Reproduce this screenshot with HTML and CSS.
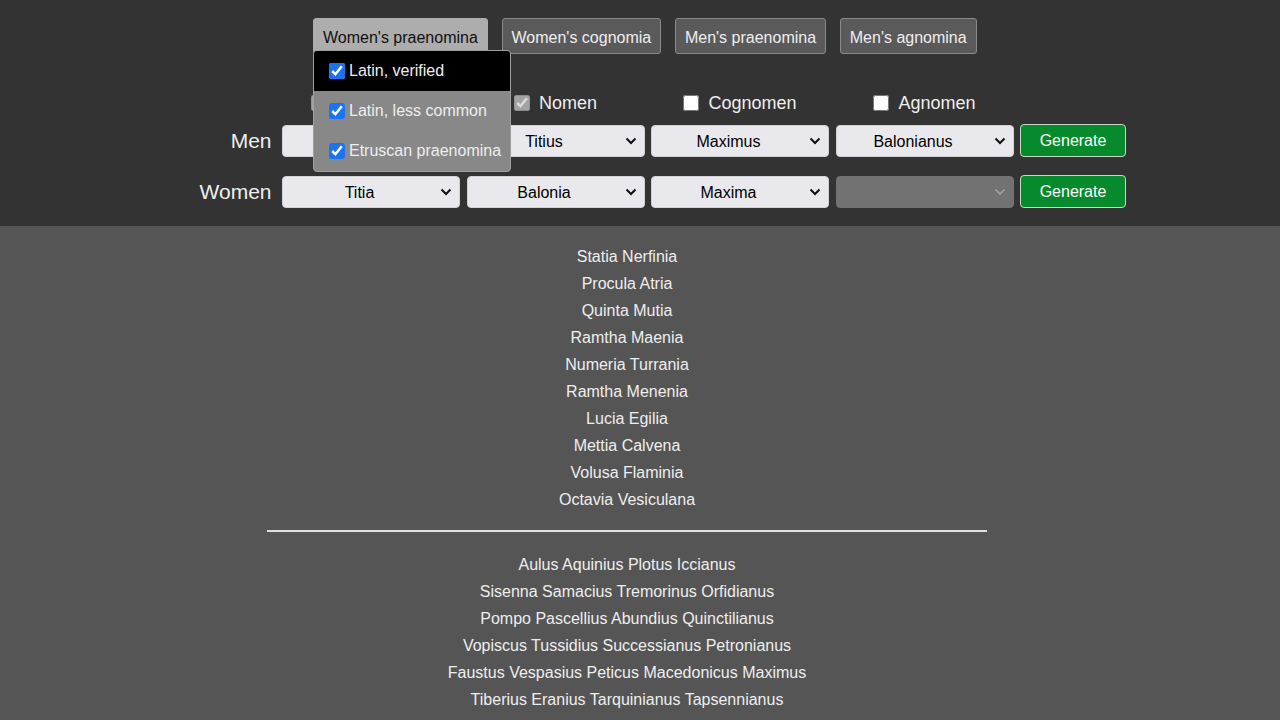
FILE: index.html
```html
<!DOCTYPE html>
<html lang="en">
<head>
<meta charset="utf-8">
<title>Roman Name Generator</title>
<link rel="stylesheet" href="styles.css">
</head>
<body>
<header class="top">
  <nav class="tabs">
    <div class="tab-wrap">
      <button class="tab tab-active">Women's praenomina</button>
      <div class="menu">
        <label class="menu-item menu-item-hover"><input type="checkbox" checked> Latin, verified</label>
        <label class="menu-item"><input type="checkbox" checked> Latin, less common</label>
        <label class="menu-item"><input type="checkbox" checked> Etruscan praenomina</label>
      </div>
    </div>
    <button class="tab">Women's cognomia</button>
    <button class="tab">Men's praenomina</button>
    <button class="tab">Men's agnomina</button>
  </nav>

  <div class="gen">
    <div class="cell"></div>
    <div class="cell check check-hidden"><input type="checkbox" checked disabled aria-label="Praenomen"></div>
    <label class="cell check"><input type="checkbox" checked disabled> Nomen</label>
    <label class="cell check"><input type="checkbox"> Cognomen</label>
    <label class="cell check"><input type="checkbox"> Agnomen</label>
    <div class="cell"></div>

    <div class="cell row-label">Men</div>
    <div class="sel"><select><option>Aulus</option></select><svg class="chev" viewBox="0 0 12 8"><path d="M1.5 1.5 L6 6 L10.5 1.5"/></svg></div>
    <div class="sel"><select><option>Titius</option></select><svg class="chev" viewBox="0 0 12 8"><path d="M1.5 1.5 L6 6 L10.5 1.5"/></svg></div>
    <div class="sel"><select><option>Maximus</option></select><svg class="chev" viewBox="0 0 12 8"><path d="M1.5 1.5 L6 6 L10.5 1.5"/></svg></div>
    <div class="sel"><select><option>Balonianus</option></select><svg class="chev" viewBox="0 0 12 8"><path d="M1.5 1.5 L6 6 L10.5 1.5"/></svg></div>
    <button class="generate">Generate</button>

    <div class="cell row-label">Women</div>
    <div class="sel"><select><option>Titia</option></select><svg class="chev" viewBox="0 0 12 8"><path d="M1.5 1.5 L6 6 L10.5 1.5"/></svg></div>
    <div class="sel"><select><option>Balonia</option></select><svg class="chev" viewBox="0 0 12 8"><path d="M1.5 1.5 L6 6 L10.5 1.5"/></svg></div>
    <div class="sel"><select><option>Maxima</option></select><svg class="chev" viewBox="0 0 12 8"><path d="M1.5 1.5 L6 6 L10.5 1.5"/></svg></div>
    <div class="sel sel-disabled"><select disabled><option></option></select><svg class="chev" viewBox="0 0 12 8"><path d="M1.5 1.5 L6 6 L10.5 1.5"/></svg></div>
    <button class="generate">Generate</button>
  </div>
</header>

<main class="results">
  <ul class="names">
    <li>Statia Nerfinia</li>
    <li>Procula Atria</li>
    <li>Quinta Mutia</li>
    <li>Ramtha Maenia</li>
    <li>Numeria Turrania</li>
    <li>Ramtha Menenia</li>
    <li>Lucia Egilia</li>
    <li>Mettia Calvena</li>
    <li>Volusa Flaminia</li>
    <li>Octavia Vesiculana</li>
  </ul>
  <hr class="divider">
  <ul class="names">
    <li>Aulus Aquinius Plotus Iccianus</li>
    <li>Sisenna Samacius Tremorinus Orfidianus</li>
    <li>Pompo Pascellius Abundius Quinctilianus</li>
    <li>Vopiscus Tussidius Successianus Petronianus</li>
    <li>Faustus Vespasius Peticus Macedonicus Maximus</li>
    <li>Tiberius Eranius Tarquinianus Tapsennianus</li>
  </ul>
</main>
</body>
</html>
```

FILE: styles.css
```css
html, body {
  margin: 0;
  padding: 0;
}
body {
  background: #555555;
  font-family: "Liberation Sans", Arial, sans-serif;
  color: #eeeeee;
  overflow: hidden;
}
.top {
  background: #333333;
  padding: 18px 0 18px;
}
.tabs {
  display: flex;
  gap: 13.7px;
  margin-left: 313px;
  height: 36px;
}
.tab-wrap {
  position: relative;
}
.tab {
  height: 36px;
  padding: 3px 9px 0;
  font-family: "Liberation Sans", Arial, sans-serif;
  font-size: 16px;
  color: #eeeeee;
  background: #5a5a5a;
  border: 1px solid #8a8a8a;
  border-radius: 3px;
  cursor: pointer;
}
.tab-active {
  background: #adadad;
  color: #111111;
  border-color: #adadad;
}
.menu {
  position: absolute;
  left: 0;
  top: 32px;
  width: 196px;
  background: #888888;
  border: 1px solid #a0a0a0;
  border-radius: 4px;
  overflow: hidden;
  z-index: 5;
}
.menu-item {
  display: flex;
  align-items: center;
  height: 40px;
  padding-left: 15px;
  font-size: 16px;
  color: #eeeeee;
  white-space: nowrap;
}
.menu-item-hover {
  background: #000000;
}
.menu-item input {
  width: 16px;
  height: 16px;
  margin: 0 4px 0 0;
  accent-color: #1a73f0;
}
.gen {
  display: grid;
  grid-template-columns: 77.5px 178px 178px 178px 178px 106px;
  grid-template-rows: 38px 51px 32px;
  column-gap: 6.5px;
  row-gap: 0;
  margin: 33px 0 0 198px;
  width: max-content;
  align-items: start;
}
.check {
  display: flex;
  align-items: center;
  justify-content: center;
  font-size: 18px;
  color: #eeeeee;
  height: 32px;
}
.check input {
  width: 16px;
  height: 16px;
  margin: 0 9px 0 0;
}
.check-hidden {
  justify-content: flex-start;
  padding-left: 29px;
}
.row-label {
  font-size: 21px;
  line-height: 32px;
  height: 32px;
  text-align: right;
  padding-right: 4px;
  color: #eeeeee;
}
.sel {
  position: relative;
  height: 32px;
}
.sel select {
  appearance: none;
  -webkit-appearance: none;
  width: 178px;
  height: 32px;
  padding: 0 27px 0 4px;
  font-family: "Liberation Sans", Arial, sans-serif;
  font-size: 16px;
  color: #000000;
  background: #e9e9ed;
  border: 1px solid #d0d0d6;
  border-radius: 4px;
  text-align: center;
  text-align-last: center;
}
.chev {
  position: absolute;
  right: 8px;
  top: 12px;
  width: 12px;
  height: 8px;
  pointer-events: none;
}
.chev path {
  fill: none;
  stroke: #111111;
  stroke-width: 2;
}
.sel-disabled select {
  background: #8e8e8e;
  border-color: #8e8e8e;
}
.sel-disabled .chev path {
  stroke: #a9a9a9;
  stroke-width: 1.3;
}
.generate {
  height: 33px;
  width: 106px;
  margin-top: -1px;
  font-family: "Liberation Sans", Arial, sans-serif;
  font-size: 16px;
  color: #ffffff;
  background: #078a2c;
  border: 1px solid #c8d8c8;
  border-radius: 4px;
  cursor: pointer;
}
.results {
  width: 720px;
  margin-left: 267px;
  padding-top: 17px;
}
.names {
  list-style: none;
  margin: 0;
  padding: 0;
  text-align: center;
  font-size: 16px;
  line-height: 27px;
  color: #eeeeee;
}
.divider {
  margin: 17px 0 19px;
  border: 0;
  height: 2px;
  background: #e0e0e0;
}
```
